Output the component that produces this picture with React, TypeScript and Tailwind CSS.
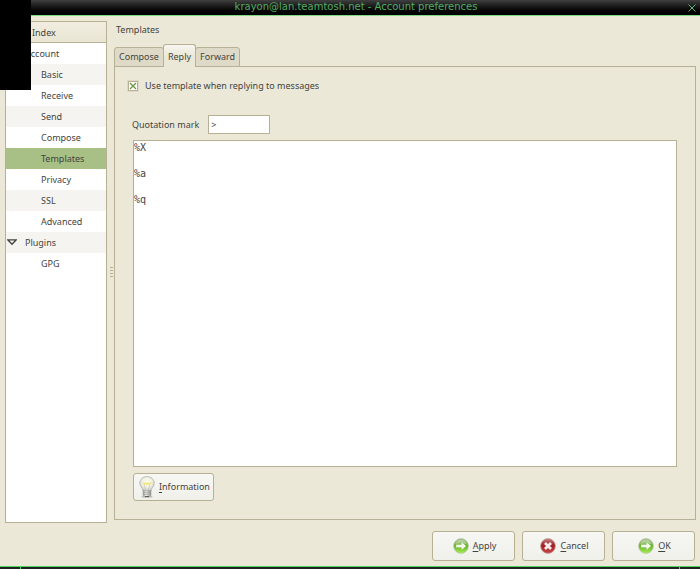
import { useState } from 'react'

interface IndexRow {
  id: string
  label: string
  level: number
}

const rows: IndexRow[] = [
  { id: 'account', label: 'Account', level: 0 },
  { id: 'basic', label: 'Basic', level: 1 },
  { id: 'receive', label: 'Receive', level: 1 },
  { id: 'send', label: 'Send', level: 1 },
  { id: 'compose', label: 'Compose', level: 1 },
  { id: 'templates', label: 'Templates', level: 1 },
  { id: 'privacy', label: 'Privacy', level: 1 },
  { id: 'ssl', label: 'SSL', level: 1 },
  { id: 'advanced', label: 'Advanced', level: 1 },
  { id: 'plugins', label: 'Plugins', level: 0 },
  { id: 'gpg', label: 'GPG', level: 1 },
]

const tabs = ['Compose', 'Reply', 'Forward']

function ExpanderIcon() {
  return (
    <svg width="10" height="8" viewBox="0 0 10 8" fill="none" aria-hidden="true">
      <path d="M0.8 0.8H9.200L5 5.2Z" stroke="#44443e" strokeWidth="1.3" />
    </svg>
  )
}

function OkIcon() {
  return (
    <svg width="16" height="16" viewBox="0 0 16 16" aria-hidden="true">
      <defs>
        <linearGradient id="green" x1="0" y1="0" x2="0" y2="1">
          <stop offset="0" stopColor="#a3b890" />
          <stop offset="0.45" stopColor="#62ad24" />
          <stop offset="1" stopColor="#a6f052" />
        </linearGradient>
      </defs>
      <circle cx="8" cy="8" r="7.4" fill="url(#green)" stroke="#b9c9aa" strokeWidth="0.8" />
      <path d="M2 6.5C3 2.8 5.4 1.8 8 1.8s5 1 6 4.7C11 5.2 5 5.2 2 6.5Z" fill="#fff" opacity="0.35" />
      <path d="M3 6.4H8.3V3.8L13.3 8L8.3 12.2V9.6H3Z" fill="#f4faec" stroke="#8cc45a" strokeWidth="0.5" />
    </svg>
  )
}

function CancelIcon() {
  return (
    <svg width="16" height="16" viewBox="0 0 16 16" aria-hidden="true">
      <defs>
        <linearGradient id="red" x1="0" y1="0" x2="0" y2="1">
          <stop offset="0" stopColor="#c08484" />
          <stop offset="0.45" stopColor="#a31c20" />
          <stop offset="1" stopColor="#c94848" />
        </linearGradient>
      </defs>
      <circle cx="8" cy="8" r="7.4" fill="url(#red)" stroke="#c09a9a" strokeWidth="0.8" />
      <path d="M5 5L11 11M11 5L5 11" stroke="#f6eeee" strokeWidth="2.8" />
    </svg>
  )
}

function BulbIcon() {
  return (
    <svg width="16" height="22" viewBox="0 0 16 22" aria-hidden="true">
      <defs>
        <radialGradient id="glass" cx="0.5" cy="0.4" r="0.55">
          <stop offset="0" stopColor="#fffde8" />
          <stop offset="0.6" stopColor="#f1f1e6" />
          <stop offset="1" stopColor="#cfcfca" />
        </radialGradient>
        <linearGradient id="cap" x1="0" y1="0" x2="1" y2="0">
          <stop offset="0" stopColor="#9a9a95" />
          <stop offset="0.4" stopColor="#f0f0ee" />
          <stop offset="1" stopColor="#8a8a85" />
        </linearGradient>
      </defs>
      <ellipse cx="8" cy="20.5" rx="5.5" ry="1.2" fill="#bbbbb5" />
      <path
        d="M8 0.6C3.8 0.6 0.8 3.5 0.8 7.2C0.8 10.3 3.6 11.5 4 15H12C12.4 11.5 15.2 10.3 15.2 7.2C15.2 3.5 12.2 0.6 8 0.6Z"
        fill="url(#glass)"
        stroke="#b8b8b2"
        strokeWidth="0.9"
      />
      <path d="M6.5 14.5L5.5 8.5M9.5 14.5L10.5 8.5" stroke="#c6c6ba" strokeWidth="0.8" />
      <path d="M3.800 6.500L5.500 8L7 7.200L8 8.200L9 7.200L10.500 8L12.200 6.500" fill="none" stroke="#f0e678" strokeWidth="1.500" />
      <path d="M4 14.5H12V19L10 20.8H6L4 19Z" fill="url(#cap)" stroke="#9b9b96" strokeWidth="0.5" />
      <path d="M4 16.5L12 16M4 18.5L12 18" stroke="#9b9b96" strokeWidth="0.7" />
      <path d="M6 20.200H10V21H6Z" fill="#45453f" />
    </svg>
  )
}

interface ActionButtonProps {
  label: string
  icon: React.ReactNode
}

function ActionButton({ label, icon }: ActionButtonProps) {
  return (
    <button
      type="button"
      className="flex h-[30px] w-[83px] items-center justify-center gap-1 rounded-[3px] border border-[#b8b094] bg-linear-to-b from-[#f6f6f3] to-[#f0f0eb] pl-0.5"
    >
      {icon}
      <span>
        <u className="underline-offset-2">{label[0]}</u>
        {label.slice(1)}
      </span>
    </button>
  )
}

export default function App() {
  const [selected, setSelected] = useState('templates')
  const [activeTab, setActiveTab] = useState('Reply')
  const [useTemplate, setUseTemplate] = useState(true)
  const [quote, setQuote] = useState('>')
  const [body, setBody] = useState('%X\n\n%a\n\n%q')

  return (
    <div className="relative flex min-h-screen flex-col bg-[#ebe8d7] font-['Noto_Sans',sans-serif] text-[9px] leading-3 text-[#44443e]">
      <header className="flex h-4 items-center border-b border-[#7fd886] bg-linear-to-b from-[#404040] to-black pr-1 text-[#50ab63]">
        <h1 className="flex-1 pb-0.5 pl-6 text-center font-['DejaVu_Sans',sans-serif] text-[10px] leading-3">
          krayon@lan.teamtosh.net - Account preferences
        </h1>
        <button type="button" aria-label="Close" className="flex h-2 w-2 items-center">
          <svg width="8" height="8" viewBox="0 0 8 8" aria-hidden="true">
            <path d="M0.5 0.5L7.5 7.5M7.5 0.5L0.5 7.5" stroke="#5fb873" />
          </svg>
        </button>
      </header>

      <div className="absolute top-0 left-0 h-[90px] w-[31px] bg-black" />

      <main className="flex flex-1 pt-[5px] pr-1 pl-[5px]">
        <nav aria-label="Index" className="mb-[-3px] flex w-[102px] shrink-0 flex-col border border-[#b8b094] bg-white">
          <h2 className="h-[21px] border-b border-[#b8b094] bg-linear-to-b from-[#f1eee0] to-[#e8e5d4] pt-px pl-[26px] leading-5">
            Index
          </h2>
          <ul>
            {rows.map(row => (
              <li key={row.id} className="odd:bg-white even:bg-[#f5f4f1]">
                <button
                  type="button"
                  onClick={() => setSelected(row.id)}
                  className={`flex h-[21px] w-full items-center text-left ${selected === row.id ? 'bg-[#a8c086]' : ''} ${row.level ? 'pl-[35px]' : 'gap-2 pl-px'}`}
                >
                  {row.level === 0 && <ExpanderIcon />}
                  {row.label}
                </button>
              </li>
            ))}
          </ul>
        </nav>

        <div className="flex w-[7px] shrink-0 flex-col items-end justify-center gap-0.5 pt-0.5 pr-px">
          <span className="h-px w-[3px] bg-[#b8b094]" />
          <span className="h-px w-[3px] bg-[#b8b094]" />
          <span className="h-px w-[3px] bg-[#b8b094]" />
          <span className="h-px w-[3px] bg-[#b8b094]" />
        </div>

        <section className="flex min-w-0 flex-1 flex-col">
          <h2 className="mb-2 pt-[3px] pl-0.5">Templates</h2>
          <div role="tablist" className="z-10 -mb-px flex h-[23px] items-end">
            {tabs.map(tab => (
              <button
                key={tab}
                type="button"
                role="tab"
                aria-selected={activeTab === tab}
                onClick={() => setActiveTab(tab)}
                className={
                  activeTab === tab
                    ? '-mx-px z-10 h-[23px] rounded-t-[3px] border border-b-0 border-[#b8b094] bg-linear-to-b from-[#f7f6f0] to-[#ebe8d7] to-50% px-1 pt-0.5'
                    : 'h-5 rounded-t-[3px] border border-[#b8b094] bg-[#dfdac7] px-1'
                }
              >
                {tab}
              </button>
            ))}
          </div>

          <div role="tabpanel" className="flex flex-1 flex-col border border-[#b8b094] pt-[13px] pr-[18px] pb-[18px] pl-[18px]">
            <label className="-ml-[5px] flex items-center gap-[7px]">
              <span className="relative flex">
                <input
                  type="checkbox"
                  checked={useTemplate}
                  onChange={e => setUseTemplate(e.target.checked)}
                  className="h-2.5 w-2.5 appearance-none border border-[#b8b094] bg-white outline outline-[#dedac6]"
                />
                {useTemplate && (
                  <svg className="pointer-events-none absolute inset-0" width="10" height="10" viewBox="0 0 10 10" aria-hidden="true">
                    <path d="M2 2L8 8M8 2L2 8" stroke="#6f9a45" strokeWidth="1.4" />
                  </svg>
                )}
              </span>
              Use template when replying to messages
            </label>

            <div className="mt-[23px] flex items-center gap-[9px]">
              <label htmlFor="quote" className="-ml-px">Quotation mark</label>
              <input
                id="quote"
                type="text"
                value={quote}
                onChange={e => setQuote(e.target.value)}
                className="h-[19px] w-[62px] border border-[#b8b094] bg-white px-0.5"
              />
            </div>

            <textarea
              aria-label="Template"
              value={body}
              onChange={e => setBody(e.target.value)}
              className="mt-1.5 min-h-40 flex-1 resize-none border border-[#b8b094] bg-white font-['DejaVu_Sans_Mono',monospace] text-[10px] leading-[13px] outline-none"
            />

            <button
              type="button"
              className="mt-1.5 flex h-7 items-center gap-1 self-start rounded-[3px] border border-[#b8b094] bg-linear-to-b from-[#f7f7f4] to-[#f0f0eb] pr-[3px] pl-[5px]"
            >
              <BulbIcon />
              <span>
                <u className="underline-offset-2">I</u>nformation
              </span>
            </button>
          </div>
        </section>
      </main>

      <footer className="flex justify-end gap-[7px] pt-[11px] pr-[5px] pb-[5px]">
        <ActionButton label="Apply" icon={<OkIcon />} />
        <ActionButton label="Cancel" icon={<CancelIcon />} />
        <ActionButton label="OK" icon={<OkIcon />} />
      </footer>

      {/* Resize handle of the window frame */}
      <div className="flex h-[3px] justify-between border-t border-[#50d25e] bg-[#1f2420] px-5">
        <span className="w-px bg-[#50d25e]" />
        <span className="w-px bg-[#50d25e]" />
      </div>
    </div>
  )
}
